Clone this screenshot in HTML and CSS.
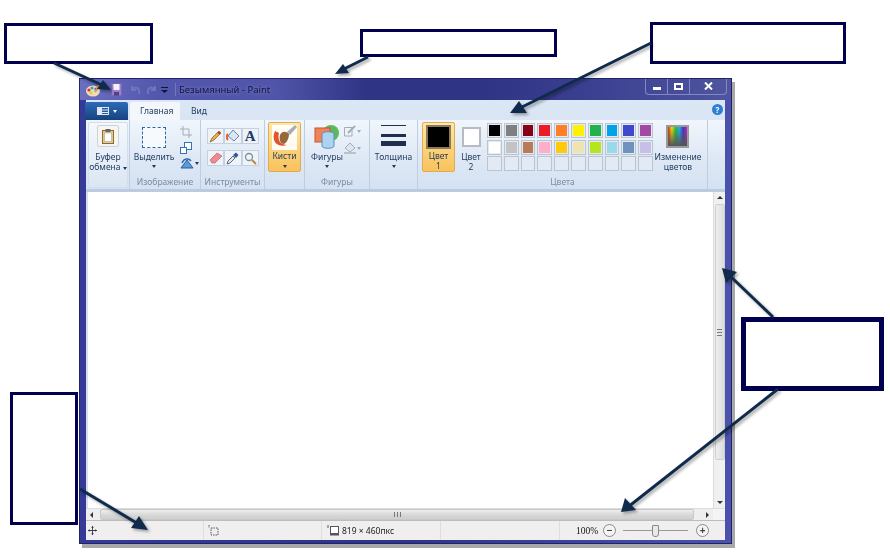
FILE: index.html
```html
<!DOCTYPE html>
<html>
<head>
    <title>Paint</title>
    <link rel="stylesheet" href="styles.css">
</head>
<body>

    <div class="window">
        <div class="title-bar">
            <svg class="qa-icon app-icon" width="16" height="14" viewBox="0 0 16 14">
                <ellipse cx="8" cy="8" rx="7" ry="5.5" fill="#e9dcc0"/>
                <circle cx="4" cy="7" r="1.6" fill="#d33"/>
                <circle cx="7" cy="5" r="1.6" fill="#3a9"/>
                <circle cx="11" cy="6" r="1.6" fill="#36c"/>
                <circle cx="6" cy="10" r="1.6" fill="#ec3"/>
                <path d="M15 1 L10 9" stroke="#e8962e" stroke-width="2"/>
            </svg>
            <svg class="qa-icon save-icon" width="11" height="13" viewBox="0 0 11 13">
                <rect x="0.5" y="0.5" width="10" height="12" fill="#a07fd0" stroke="#7c63b4"/>
                <rect x="2.5" y="1" width="6" height="6" fill="#f4f2fa"/>
                <rect x="3" y="9" width="5" height="3.5" fill="#4a4580"/>
            </svg>
            <svg class="qa-icon undo-icon" width="12" height="12" viewBox="0 0 12 12">
                <path d="M2 2 V6 H6 M2 6 C5 2 10 3 9 10" fill="none" stroke="#7174bd" stroke-width="2"/>
            </svg>
            <svg class="qa-icon redo-icon" width="12" height="12" viewBox="0 0 12 12">
                <path d="M10 2 V6 H6 M10 6 C7 2 2 3 3 10" fill="none" stroke="#7174bd" stroke-width="2"/>
            </svg>
            <svg class="qa-icon more-icon" width="7" height="7" viewBox="0 0 7 7">
                <path d="M0 1 H7 V2 H0 Z M0 4 H7 L3.5 7 Z" fill="#14143a"/>
            </svg>
            <span class="qa-sep"></span>
            <span class="title-text">Безымянный - Paint</span>
            <div class="win-controls">
                <div class="win-btn min-btn"><span class="min-glyph"></span></div>
                <div class="win-btn max-btn"><span class="max-glyph"></span></div>
                <div class="win-btn close-btn">
                    <svg width="9" height="8" viewBox="0 0 9 8"><path d="M1 0.5 L8 7.5 M8 0.5 L1 7.5" stroke="#fff" stroke-width="2"/></svg>
                </div>
            </div>
        </div>

        <div class="client">
            <div class="tabs">
                <div class="app-menu">
                    <svg width="12" height="8" viewBox="0 0 12 8"><rect width="12" height="8" fill="#dfe8f6"/><rect x="5" y="1" width="6" height="1.5" fill="#2a5a9e"/><rect x="5" y="3.5" width="6" height="1.5" fill="#2a5a9e"/><rect x="5" y="6" width="6" height="1" fill="#2a5a9e"/></svg>
                    <span class="caret caret-white"></span>
                </div>
                <div class="tab tab-active">Главная</div>
                <div class="tab">Вид</div>
                <div class="help-btn">?</div>
            </div>

            <div class="ribbon">
                <div class="group g-clipboard">
                    <div class="group-body clip-body">
                        <div class="clip-icon">
                            <svg width="12" height="15" viewBox="0 0 12 15">
                                <rect x="0.5" y="1.5" width="11" height="13" fill="#e3c98e" stroke="#8a6a35"/>
                                <rect x="2.5" y="4" width="7" height="8.5" fill="#fff" stroke="#9a9a9a" stroke-width="0.5"/>
                                <rect x="3.5" y="0" width="5" height="3" fill="#666"/>
                            </svg>
                        </div>
                        <div class="big-label">Буфер<br>обмена <span class="caret"></span></div>
                    </div>
                </div>

                <div class="group g-select">
                    <div class="group-body select-body">
                        <div class="select-main">
                            <div class="dash-rect"></div>
                            <div class="big-label">Выделить</div>
                            <span class="caret"></span>
                        </div>
                        <div class="select-side">
                            <svg width="12" height="12" viewBox="0 0 12 12"><path d="M3 0 V9 H12 M0 3 H9 V12" fill="none" stroke="#a3aeba" stroke-width="1"/></svg>
                            <svg width="12" height="12" viewBox="0 0 12 12"><rect x="4.5" y="0.5" width="7" height="7" fill="#fff" stroke="#3a6fb5"/><rect x="0.5" y="5.5" width="6" height="6" fill="#fff" stroke="#3a6fb5"/></svg>
                            <div class="rotate-wrap">
                                <svg width="14" height="11" viewBox="0 0 14 11"><path d="M1 10 L7 2 L13 10 Z" fill="#5b9bd8" stroke="#2a5a9e"/><path d="M2 5 C4 0 9 0 11 3" fill="none" stroke="#2a6ab5" stroke-width="1.5"/></svg>
                                <span class="caret"></span>
                            </div>
                        </div>
                    </div>
                    <div class="group-label">Изображение</div>
                </div>

                <div class="group g-tools">
                    <div class="group-body">
                        <div class="tools-grid">
                            <div class="tool"><svg width="13" height="13" viewBox="0 0 13 13"><path d="M1 12 L3 8 L10 1 L12 3 L5 10 Z" fill="#e8b23c" stroke="#7a5a20" stroke-width="0.7"/><path d="M9 2 L11 4" stroke="#c33" stroke-width="2"/></svg></div>
                            <div class="tool"><svg width="14" height="14" viewBox="0 0 14 14"><path d="M7 1 L13 7 L8 12 L2 7 Z" fill="#dbe6f2" stroke="#6a86a8"/><path d="M2 5 C0 7 1 10 2 11" fill="none" stroke="#e0612c" stroke-width="2"/></svg></div>
                            <div class="tool tool-letter">A</div>
                            <div class="tool"><svg width="14" height="12" viewBox="0 0 14 12"><path d="M1 8 L8 1 L13 4 L6 11 L3 11 Z" fill="#ee8a92" stroke="#b8656c" stroke-width="0.7"/></svg></div>
                            <div class="tool"><svg width="13" height="13" viewBox="0 0 13 13"><path d="M1 12 L2 9 L7 4 L9 6 L4 11 Z" fill="#dfe8f2" stroke="#667"/><path d="M7 3 L10 0.5 L12.5 3 L10 6 Z" fill="#2a5a9e"/></svg></div>
                            <div class="tool"><svg width="13" height="13" viewBox="0 0 13 13"><circle cx="5" cy="5" r="3.5" fill="#eef4fa" stroke="#7f8c9a" stroke-width="1.3"/><path d="M8 8 L12 12" stroke="#b58a45" stroke-width="2"/></svg></div>
                        </div>
                    </div>
                    <div class="group-label">Инструменты</div>
                </div>

                <div class="group g-brushes">
                    <div class="group-body">
                        <div class="hot-btn brush-btn">
                            <svg width="25" height="25" viewBox="0 0 25 25">
                                <rect width="25" height="25" fill="#fff" opacity="0.9"/>
                                <path d="M3 6 C-1 15 4 23 15 20 C9 20 5 16 7 8 Z" fill="#e0552a"/>
                                <path d="M8 10 C10 6 14 6 17 9 C17 14 14 19 11 19 C8 18 7 14 8 10 Z" fill="#96693c"/>
                                <path d="M15 7 L23 0 L25 2 L18 10 Z" fill="#a9adb5"/>
                            </svg>
                            <div class="big-label">Кисти</div>
                            <span class="caret"></span>
                        </div>
                    </div>
                </div>

                <div class="group g-shapes">
                    <div class="group-body shapes-body">
                        <div class="shapes-main">
                            <svg width="26" height="24" viewBox="0 0 26 24">
                                <circle cx="17" cy="8" r="8" fill="#5cb85c"/>
                                <rect x="1" y="3" width="15" height="14" fill="#f0835a" stroke="#c9552c"/>
                                <path d="M8 9 C8 6 20 6 20 9 V21 C20 24 8 24 8 21 Z" fill="#aed3ee" stroke="#5b91c0"/>
                            </svg>
                            <div class="big-label">Фигуры</div>
                            <span class="caret"></span>
                        </div>
                        <div class="shapes-side">
                            <div class="side-row">
                                <svg width="12" height="12" viewBox="0 0 12 12"><path d="M0.5 2.5 H8 V11 H0.5 Z" fill="#eef2f7" stroke="#a3adb8"/><path d="M4 8 L11 1" stroke="#a3adb8" stroke-width="2"/></svg>
                                <span class="caret caret-pale"></span>
                            </div>
                            <div class="side-row">
                                <svg width="12" height="12" viewBox="0 0 12 12"><path d="M6 1 L11 6 L6 10 L1 6 Z" fill="#dde5ee" stroke="#a3adb8"/><rect x="0" y="10" width="12" height="2" fill="#b8c2cc"/></svg>
                                <span class="caret caret-pale"></span>
                            </div>
                        </div>
                    </div>
                    <div class="group-label">Фигуры</div>
                </div>

                <div class="group g-thick">
                    <div class="group-body">
                        <div class="thick-main">
                            <div class="line line-1"></div>
                            <div class="line line-2"></div>
                            <div class="line line-3"></div>
                            <div class="big-label">Толщина</div>
                            <span class="caret"></span>
                        </div>
                    </div>
                </div>

                <div class="group g-colors">
                    <div class="group-body colors-body">
                        <div class="hot-btn color-one">
                            <div class="color-big"></div>
                            <div class="big-label">Цвет<br>1</div>
                        </div>
                        <div class="color-two">
                            <div class="color-mid"></div>
                            <div class="big-label">Цвет<br>2</div>
                        </div>
                        <div class="palette">
                            <div class="swatch"><i class="c1"></i></div>
                            <div class="swatch"><i class="c2"></i></div>
                            <div class="swatch"><i class="c3"></i></div>
                            <div class="swatch"><i class="c4"></i></div>
                            <div class="swatch"><i class="c5"></i></div>
                            <div class="swatch"><i class="c6"></i></div>
                            <div class="swatch"><i class="c7"></i></div>
                            <div class="swatch"><i class="c8"></i></div>
                            <div class="swatch"><i class="c9"></i></div>
                            <div class="swatch"><i class="c10"></i></div>
                            <div class="swatch"><i class="c11"></i></div>
                            <div class="swatch"><i class="c12"></i></div>
                            <div class="swatch"><i class="c13"></i></div>
                            <div class="swatch"><i class="c14"></i></div>
                            <div class="swatch"><i class="c15"></i></div>
                            <div class="swatch"><i class="c16"></i></div>
                            <div class="swatch"><i class="c17"></i></div>
                            <div class="swatch"><i class="c18"></i></div>
                            <div class="swatch"><i class="c19"></i></div>
                            <div class="swatch"><i class="c20"></i></div>
                            <div class="swatch"></div>
                            <div class="swatch"></div>
                            <div class="swatch"></div>
                            <div class="swatch"></div>
                            <div class="swatch"></div>
                            <div class="swatch"></div>
                            <div class="swatch"></div>
                            <div class="swatch"></div>
                            <div class="swatch"></div>
                            <div class="swatch"></div>
                        </div>
                        <div class="edit-colors">
                            <div class="rainbow"></div>
                            <div class="big-label">Изменение<br>цветов</div>
                        </div>
                    </div>
                    <div class="group-label">Цвета</div>
                </div>
            </div>

            <div class="canvas-row">
                <div class="canvas"></div>
                <div class="vscroll">
                    <span class="arrow-up"></span>
                    <div class="vthumb"><span class="grip-h"></span></div>
                    <span class="arrow-down"></span>
                </div>
            </div>

            <div class="hscroll">
                <span class="arrow-left"></span>
                <div class="hthumb"><span class="grip-v"></span></div>
                <span class="arrow-right"></span>
                <span class="corner"></span>
            </div>

            <div class="status-bar">
                <div class="st-cell st-pos">
                    <svg width="9" height="9" viewBox="0 0 10 10"><path d="M5 0 V10 M0 5 H10" stroke="#334" stroke-width="1"/><path d="M5 0 L3.5 2 H6.5 Z M5 10 L3.5 8 H6.5 Z M0 5 L2 3.5 V6.5 Z M10 5 L8 3.5 V6.5 Z" fill="#334"/></svg>
                </div>
                <div class="st-cell st-sel">
                    <svg width="11" height="11" viewBox="0 0 11 11"><path d="M1 0 V3 M3 3 H10 V10 H3 Z" fill="none" stroke="#556" stroke-dasharray="1.5 1"/></svg>
                </div>
                <div class="st-cell st-size">
                    <svg width="12" height="11" viewBox="0 0 12 11"><path d="M1 0 V3" stroke="#556"/><rect x="3.5" y="1.5" width="8" height="7" fill="#fff" stroke="#556"/><rect x="3" y="9" width="9" height="1.5" fill="#556"/></svg>
                    <span>819 × 460пкс</span>
                </div>
                <div class="st-cell st-empty"></div>
                <div class="st-cell st-zoom">
                    <span class="zoom-text">100%</span>
                    <span class="zoom-btn">−</span>
                    <div class="slider"><span class="slider-thumb"></span></div>
                    <span class="zoom-btn zoom-plus">+</span>
                </div>
            </div>
        </div>
    </div>

    <div class="note note-a"></div>
    <div class="note note-b"></div>
    <div class="note note-c"></div>
    <div class="note note-d"></div>
    <div class="note note-e"></div>

    <svg class="arrows" width="890" height="555" viewBox="0 0 890 555">
        <g class="arrow-set">
            <path d="M54 63 L104 86" />
            <path d="M368 57 L342 70" />
            <path d="M651 43 L520 108" />
            <path d="M773 317 L728 274" />
            <path d="M778 389 L628 507" />
            <path d="M80 489 L140 525" />
        </g>
        <g class="head-set">
            <path d="M111 90 L97 89 L103 80 Z" />
            <path d="M335 74 L349 73 L343 64 Z" />
            <path d="M510 113 L527 113 L519 101 Z" />
            <path d="M722 268 L737 272 L726 283 Z" />
            <path d="M621 512 L625 498 L636 510 Z" />
            <path d="M148 530 L131 528 L139 516 Z" />
        </g>
    </svg>

</body>
</html>
```

FILE: styles.css
```css
body {
    margin: 0;
    width: 890px;
    height: 555px;
    overflow: hidden;
    background: white;
    font-family: "Noto Sans", Arial, sans-serif;
    position: relative;
}

.window {
    width: 653px;
    height: 466px;
    margin: 78px 0 0 79px;
    padding: 0 6px 3px 6px;
    box-sizing: border-box;
    display: flex;
    flex-direction: column;
    background: linear-gradient(90deg, #343a96, #2f3488 50%, #4a52ac);
    border: 1px solid #1f2468;
    box-shadow: 3px 4px 0 #a8a8a8;
    filter: blur(0.45px);
}

.title-bar {
    height: 21px;
    flex: none;
    margin: 0 -6px;
    padding-left: 5px;
    display: flex;
    align-items: center;
    background: linear-gradient(90deg, #6a6fc0 0, #5257ac 12%, #5055a9 30%, #2f3485 44%, #2f3485 62%, #3c4192 80%, #50559f 100%);
}

.qa-icon {
    flex: none;
}

.save-icon {
    margin-left: 10px;
}

.undo-icon {
    margin-left: 8px;
}

.redo-icon {
    margin-left: 3px;
}

.more-icon {
    margin-left: 4px;
}

.qa-sep {
    width: 1px;
    height: 13px;
    margin: 0 3px 0 7px;
    background: #7377bd;
}

.title-text {
    font-size: 9.5px;
    color: #14143a;
    text-shadow: 0 0 4px #8a8dd0;
}

.win-controls {
    margin: -6px 4px 0 auto;
    height: 15px;
    display: flex;
    border: 1px solid #8388c4;
    border-top: none;
    border-radius: 0 0 4px 4px;
}

.win-btn {
    display: flex;
    align-items: center;
    justify-content: center;
    border-right: 1px solid #8388c4;
    width: 21px;
}

.close-btn {
    width: 36px;
    border-right: none;
}

.min-glyph {
    width: 8px;
    height: 3px;
    margin-top: 5px;
    background: white;
}

.max-glyph {
    width: 5px;
    height: 3px;
    border: 2px solid white;
}

.client {
    flex: 1;
    display: flex;
    flex-direction: column;
    min-height: 0;
    background: #f0eeee;
}

.tabs {
    height: 20px;
    flex: none;
    display: flex;
    align-items: flex-end;
    background: linear-gradient(#dce7f5, #d9e5f4);
    font-size: 8.5px;
    color: #1e395b;
    position: relative;
}

.app-menu {
    width: 43px;
    height: 18px;
    margin-left: -1px;
    display: flex;
    align-items: center;
    justify-content: center;
    gap: 4px;
    background: linear-gradient(#2b6cb8, #17427f);
    border-radius: 2px 2px 0 0;
}

.tab {
    height: 18px;
    line-height: 18px;
    padding: 0 10px;
    margin-left: 1px;
}

.tab-active {
    width: 30px;
    text-align: center;
    margin-left: 2px;
    background: #f3f7fc;
    border-radius: 2px 2px 0 0;
}

.help-btn {
    position: absolute;
    right: 2px;
    top: 4px;
    width: 11px;
    height: 11px;
    border-radius: 50%;
    background: #2f7fd0;
    color: white;
    font-size: 8px;
    font-weight: bold;
    line-height: 11px;
    text-align: center;
}

.ribbon {
    height: 69px;
    flex: none;
    display: flex;
    background: linear-gradient(#f1f6fc, #dee8f5 55%, #d5e2f2);
    border-bottom: 3px solid #bccbdf;
    box-sizing: content-box;
}

.group {
    flex: none;
    display: flex;
    flex-direction: column;
    box-sizing: border-box;
    border-right: 1px solid #bfcde0;
    font-size: 8.5px;
    color: #1e395b;
}

.group-body {
    flex: 1;
    display: flex;
    min-height: 0;
}

.group-label {
    height: 13px;
    line-height: 11px;
    text-align: center;
    color: #7c8ca3;
    font-size: 8.5px;
}

.g-clipboard { width: 44px; }
.g-select { width: 71px; }
.g-tools { width: 64px; }
.g-brushes { width: 40px; }
.g-shapes { width: 65px; }
.g-thick { width: 48px; }
.g-colors { width: 290px; }

.big-label {
    font-size: 8.5px;
    line-height: 10px;
    text-align: center;
    color: #1e395b;
    white-space: nowrap;
}

.caret {
    display: inline-block;
    width: 0;
    height: 0;
    border: 2.5px solid transparent;
    border-top: 3px solid #1e395b;
    border-bottom: none;
}

.caret-white {
    border-top-color: white;
}

.caret-pale {
    border-top-color: #a3adb8;
}

.clip-body {
    flex-direction: column;
    align-items: center;
    margin: 2px 1px 1px 2px;
    padding-top: 2px;
    border: 1px solid #d2deed;
    border-radius: 2px;
    background: linear-gradient(#f4f8fc, #dbe6f4);
}

.clip-icon {
    width: 22px;
    height: 22px;
    margin-bottom: 5px;
    box-sizing: border-box;
    display: flex;
    align-items: center;
    justify-content: center;
    background: #f7f5ee;
    border: 1px solid #c9d3df;
    border-radius: 2px;
}

.select-body {
    padding: 7px 0 0 3px;
}

.select-main {
    width: 42px;
    display: flex;
    flex-direction: column;
    align-items: center;
}

.dash-rect {
    width: 22px;
    height: 19px;
    margin-bottom: 4px;
    border: 1px dashed #2d6aa8;
    background: #f7fafd;
}

.select-main .caret {
    margin-top: 3px;
}

.select-side {
    margin: -1px 0 0 5px;
    display: flex;
    flex-direction: column;
    gap: 4px;
}

.rotate-wrap {
    display: flex;
    align-items: center;
    gap: 1px;
}

.tools-grid {
    margin: 8px 0 0 6px;
    display: grid;
    grid-template-columns: repeat(3, 17.3px);
    grid-auto-rows: 16px;
    row-gap: 6px;
}

.tool {
    display: flex;
    align-items: center;
    justify-content: center;
    background: #eef3f9;
    border: 1px solid #c5d1e0;
}

.tool-letter {
    font-family: "Liberation Serif", serif;
    font-size: 15px;
    font-weight: bold;
    color: #1e3a66;
}

.hot-btn {
    display: flex;
    flex-direction: column;
    align-items: center;
    box-sizing: border-box;
    background: linear-gradient(#fde7a8, #fbd27a 55%, #f9c25c);
    border: 1px solid #e0ab55;
    border-radius: 2px;
}

.brush-btn {
    width: 33px;
    height: 50px;
    margin: 2px 0 0 3px;
    padding-top: 2px;
}

.brush-btn .big-label {
    margin-top: 1px;
}

.brush-btn .caret {
    margin-top: 4px;
}

.shapes-body {
    padding: 5px 0 0 8px;
}

.shapes-main {
    width: 28px;
    display: flex;
    flex-direction: column;
    align-items: center;
}

.shapes-main .big-label {
    margin-top: 3px;
}

.shapes-main .caret {
    margin-top: 3px;
}

.shapes-side {
    margin: 0 0 0 3px;
    display: flex;
    flex-direction: column;
    gap: 5px;
}

.side-row {
    display: flex;
    align-items: center;
    gap: 1px;
}

.thick-main {
    width: 47px;
    display: flex;
    flex-direction: column;
    align-items: center;
    padding-top: 5px;
}

.line {
    width: 25px;
    background: #1f2f4d;
}

.line-1 { height: 1px; margin-bottom: 8px; }
.line-2 { height: 3px; margin-bottom: 4px; }
.line-3 { height: 5px; margin-bottom: 6px; }

.thick-main .caret {
    margin-top: 3px;
}

.colors-body {
    padding-top: 2px;
}

.color-one {
    width: 33px;
    height: 50px;
    margin-left: 4px;
    padding-top: 2px;
}

.color-big {
    width: 21px;
    height: 21px;
    background: black;
    border: 2px solid #8a7a55;
    margin-bottom: 2px;
}

.color-two {
    width: 32px;
    display: flex;
    flex-direction: column;
    align-items: center;
    padding-top: 5px;
}

.color-mid {
    width: 15px;
    height: 16px;
    background: white;
    border: 2px solid #b6bcc5;
    margin-bottom: 5px;
}

.palette {
    display: grid;
    grid-template-columns: repeat(10, 14.8px);
    grid-auto-rows: 15px;
    gap: 1.7px 2px;
    align-self: flex-start;
    padding-top: 1px;
}

.swatch {
    box-sizing: border-box;
    border: 1px solid #bcc4ce;
    padding: 1px;
    background: #e2eaf5;
}

.swatch i {
    display: block;
    width: 100%;
    height: 100%;
}

.c1 { background: #000000; }
.c2 { background: #7f7f7f; }
.c3 { background: #880015; }
.c4 { background: #ed1c24; }
.c5 { background: #ff7f27; }
.c6 { background: #fff200; }
.c7 { background: #22b14c; }
.c8 { background: #00a2e8; }
.c9 { background: #3f48cc; }
.c10 { background: #a349a4; }
.c11 { background: #ffffff; }
.c12 { background: #c3c3c3; }
.c13 { background: #b97a57; }
.c14 { background: #ffaec9; }
.c15 { background: #ffc90e; }
.c16 { background: #efe4b0; }
.c17 { background: #b5e61d; }
.c18 { background: #99d9ea; }
.c19 { background: #7092be; }
.c20 { background: #c8bfe7; }

.edit-colors {
    width: 50px;
    display: flex;
    flex-direction: column;
    align-items: center;
    padding-top: 3px;
}

.rainbow {
    width: 19px;
    height: 19px;
    margin-bottom: 4px;
    border: 2px solid #9a9a9a;
    background: linear-gradient(transparent, #555), linear-gradient(90deg, #e02424, #f5e400, #22c040, #20b0f0, #4030d0, #d020c0);
}

.canvas-row {
    flex: 1;
    min-height: 0;
    display: flex;
    background: white;
    border-left: 2px solid #d5e0ee;
}

.canvas {
    flex: 1;
}

.vscroll {
    width: 12px;
    flex: none;
    display: flex;
    flex-direction: column;
    align-items: center;
    background: #f0f0f0;
    padding: 4px 0;
    box-sizing: border-box;
    border-left: 1px solid #dcdcdc;
}

.vthumb {
    width: 10px;
    height: 256px;
    margin: 5px 0 auto 0;
    display: flex;
    align-items: center;
    justify-content: center;
    background: linear-gradient(90deg, #efefef, #dcdcdc);
    border: 1px solid #cfcfcf;
    box-sizing: border-box;
    border-radius: 2px;
}

.grip-h {
    width: 5px;
    height: 5px;
    border-top: 1px solid #777;
    border-bottom: 1px solid #777;
    background: linear-gradient(transparent 40%, #777 40%, #777 60%, transparent 60%);
}

.grip-v {
    width: 5px;
    height: 5px;
    border-left: 1px solid #777;
    border-right: 1px solid #777;
    background: linear-gradient(90deg, transparent 40%, #777 40%, #777 60%, transparent 60%);
}

.arrow-up,
.arrow-down,
.arrow-left,
.arrow-right {
    flex: none;
    width: 0;
    height: 0;
    border: 3px solid transparent;
}

.arrow-up { border-bottom-color: #333; border-top: none; }
.arrow-down { border-top-color: #333; border-bottom: none; }
.arrow-left { border-right-color: #333; border-left: none; margin-left: 4px; }
.arrow-right { border-left-color: #333; border-right: none; margin-right: 4px; }

.hscroll {
    height: 12px;
    flex: none;
    display: flex;
    align-items: center;
    background: #eeeeee;
    border-top: 1px solid #dcdcdc;
    box-sizing: border-box;
}

.hthumb {
    width: 594px;
    height: 11px;
    margin: 0 auto 0 7px;
    display: flex;
    align-items: center;
    justify-content: center;
    background: linear-gradient(#eeeeee, #d6d6d6 60%, #cfcfcf);
    border: 1px solid #c8c8c8;
    box-sizing: border-box;
    border-radius: 2px;
}

.corner {
    width: 12px;
    height: 11px;
    background: #f4f4f4;
}

.status-bar {
    height: 20px;
    flex: none;
    display: flex;
    border-top: 1px solid #bdbdbd;
    box-sizing: border-box;
    background: #f0eeee;
    font-size: 8.5px;
    color: #222;
}

.st-cell {
    box-sizing: border-box;
    display: flex;
    align-items: center;
    border-right: 1px solid #e0dddd;
}

.st-pos { width: 118px; padding-left: 2px; }
.st-sel { width: 118px; padding-left: 4px; }
.st-size { width: 119px; padding-left: 5px; gap: 3px; }
.st-empty { width: 119px; }
.st-zoom { flex: 1; border-right: none; padding-left: 16px; }

.zoom-text {
    font-family: "Liberation Serif", serif;
    font-size: 9.5px;
    color: #111;
}

.zoom-btn {
    width: 11px;
    height: 11px;
    margin-left: 5px;
    border: 1px solid #8a8a8a;
    border-radius: 50%;
    line-height: 10px;
    text-align: center;
    font-size: 10px;
    font-weight: bold;
    color: #444;
    background: #f4f4f4;
}

.zoom-plus {
    margin-left: 8px;
}

.slider {
    width: 65px;
    height: 1px;
    margin-left: 7px;
    background: #9a9a9a;
    display: flex;
    align-items: center;
    justify-content: center;
}

.slider-thumb {
    width: 5px;
    height: 10px;
    background: #e8e8e8;
    border: 1px solid #888;
    border-radius: 1px 1px 3px 3px;
}

.note {
    position: absolute;
    box-sizing: border-box;
    background: white;
    border: 3px solid #00004f;
    filter: blur(0.3px);
}

.note-a { left: 4px; top: 23px; width: 149px; height: 41px; }
.note-b { left: 360px; top: 29px; width: 197px; height: 28px; }
.note-c { left: 650px; top: 22px; width: 196px; height: 42px; }
.note-d { left: 741px; top: 317px; width: 143px; height: 74px; border-width: 5px; }
.note-e { left: 10px; top: 392px; width: 68px; height: 133px; }

.arrows {
    position: absolute;
    left: 0;
    top: 0;
    filter: drop-shadow(2px 2px 1.5px rgba(0, 0, 0, 0.35));
}

.arrow-set path {
    fill: none;
    stroke: #102a4c;
    stroke-width: 3;
}

.head-set path {
    fill: #102a4c;
}
```
